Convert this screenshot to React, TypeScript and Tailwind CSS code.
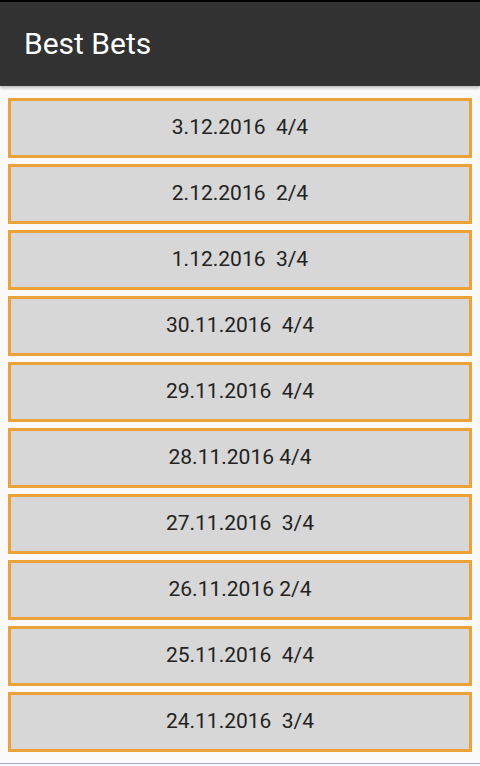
const bets = [
  "3.12.2016  4/4",
  "2.12.2016  2/4",
  "1.12.2016  3/4",
  "30.11.2016  4/4",
  "29.11.2016  4/4",
  "28.11.2016 4/4",
  "27.11.2016  3/4",
  "26.11.2016 2/4",
  "25.11.2016  4/4",
  "24.11.2016  3/4",
];

export default function App() {
  return (
    <div
      className="h-[766px] w-[480px] flex flex-col bg-[#fafafa] overflow-hidden"
      style={{ fontFamily: "Roboto, 'Noto Sans', sans-serif" }}
    >
      <div className="h-[2px] bg-black" />
      <header className="relative z-10 h-[84px] bg-[#323232] flex items-center px-6 shadow-[0_2px_3px_rgba(0,0,0,0.25)]">
        <h1 className="text-[30px] text-white leading-none">Best Bets</h1>
      </header>

      <div className="flex flex-col gap-[6px] px-2 pt-3">
        {bets.map((b) => (
          <button
            key={b}
            className="h-[60px] w-full border-[3px] border-[#eda238] bg-[#d6d7d6] text-[21px] text-[#222] whitespace-pre"
          >
            {b}
          </button>
        ))}
      </div>

      <div className="mt-auto mb-[2px] h-px bg-[#9eafc0]" />
    </div>
  );
}
